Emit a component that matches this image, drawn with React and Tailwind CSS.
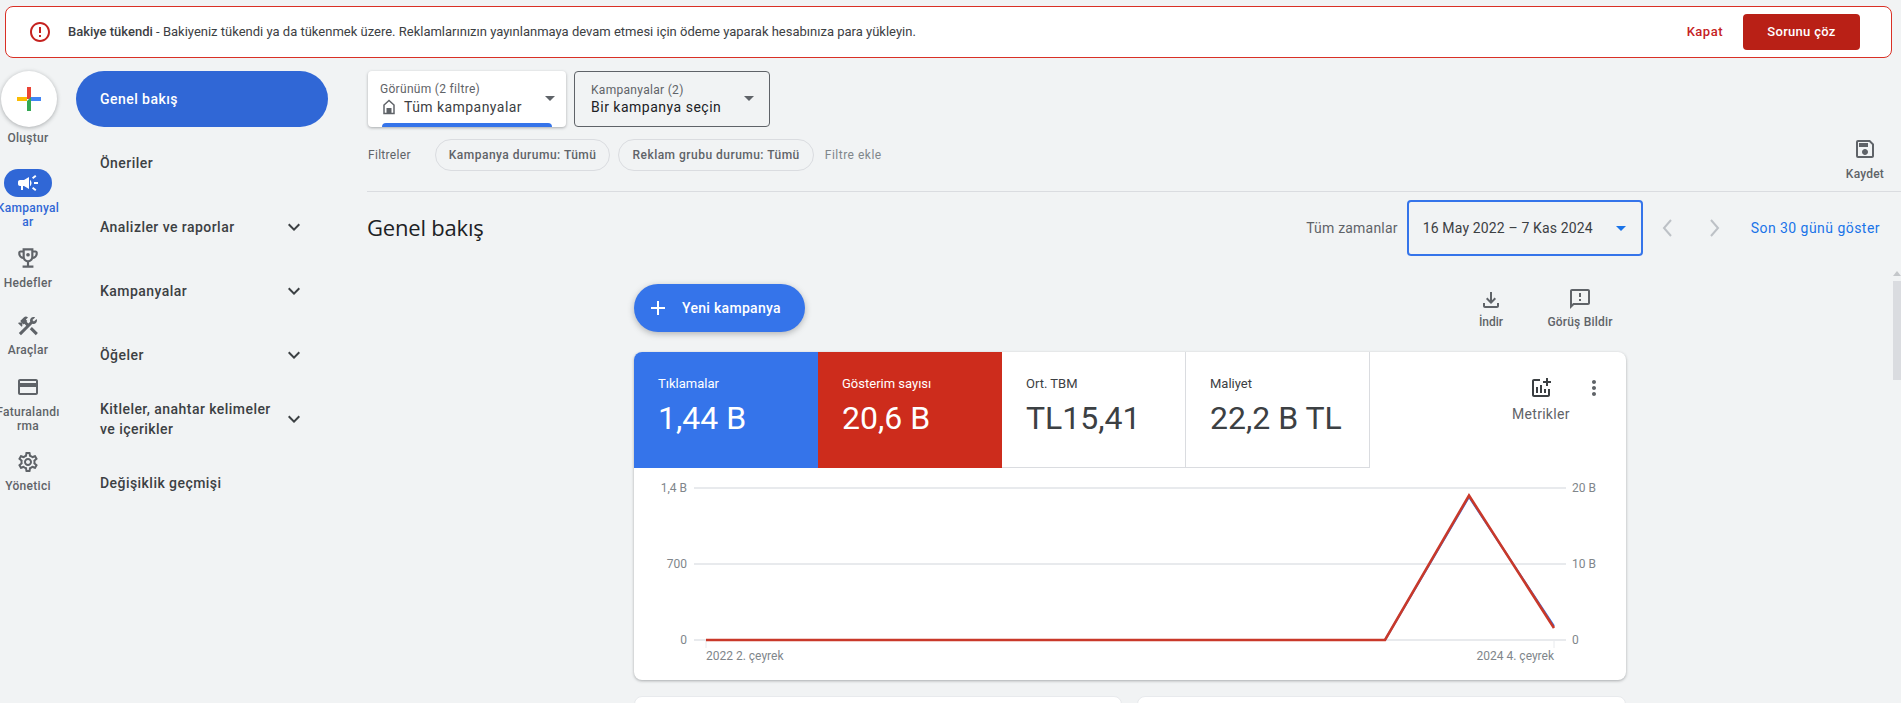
import React from "react";
import {
  MdCampaign,
  MdConstruction,
  MdCreditCard,
  MdOutlineSettings,
  MdExpandMore,
  MdErrorOutline,
  MdOutlineSave,
  MdOutlineFileDownload,
  MdOutlineFeedback,
  MdOutlineAddchart,
  MdMoreVert,
  MdAdd,
} from "react-icons/md";

const navItems = [
  { label: "Öneriler" },
  { label: "Analizler ve raporlar", more: true },
  { label: "Kampanyalar", more: true },
  { label: "Öğeler", more: true },
  { label: "Kitleler, anahtar kelimeler ve içerikler", more: true },
  { label: "Değişiklik geçmişi" },
];

const RailLabel = ({ children, className = "" }) => (
  <div className={`w-[66px] shrink-0 break-all text-center text-[12px] leading-[14px] tracking-[0.3px] font-medium ${className}`}>
    {children}
  </div>
);

const Caret = ({ className = "" }) => (
  <svg viewBox="0 0 10 5" className={`w-[10px] h-[5px] ${className}`}>
    <path d="M0 0h10L5 5z" fill="currentColor" />
  </svg>
);

const GooglePlus = () => (
  <svg viewBox="0 0 24 24" className="w-6 h-6">
    <path d="M10 0h4v12h-4z" fill="#ea4335" />
    <path d="M0 10h10v4H0z" fill="#fbbc04" />
    <path d="M14 10h10v4H12z" fill="#4285f4" />
    <path d="M10 14l4-4v14h-4z" fill="#34a853" />
  </svg>
);

const Trophy = ({ className = "" }) => (
  <svg viewBox="0 0 24 24" className={`w-[26px] h-[26px] ${className}`} fill="currentColor">
    <path
      fillRule="evenodd"
      d="M19 5h-2V3H7v2H5c-1.1 0-2 .9-2 2v1c0 2.55 1.92 4.63 4.39 4.94.63 1.5 1.98 2.63 3.61 2.96V19H7v2h10v-2h-4v-3.100c1.630-.33 2.980-1.460 3.610-2.960C19.080 12.630 21 10.550 21 8V7c0-1.100-.9-2-2-2zM5 8V7h2v3.820C5.840 10.400 5 9.300 5 8zm7 6c-1.650 0-3-1.350-3-3V5h6v6c0 1.650-1.350 3-3 3zm7-6c0 1.300-.84 2.400-2 2.820V7h2v1z"
    />
    <circle cx="12" cy="9" r="1.700" />
  </svg>
);

const HomeIcon = () => (
  <svg viewBox="0 0 16 16" className="w-4 h-4 mr-[7px] shrink-0 text-[#5f6368]">
    <path d="M8 1.500L3 6v8.500h10V6z" fill="none" stroke="currentColor" strokeWidth="1.500" />
    <path d="M5.500 9h5v5.500h-5z" fill="currentColor" />
  </svg>
);

const Rail = () => (
  <div className="w-14 shrink-0 flex flex-col items-center text-[#5f6368]">
    <div className="w-14 h-14 ml-px shrink-0 rounded-full bg-white shadow-[0_1px_4px_rgba(60,64,67,0.4)] flex items-center justify-center">
      <GooglePlus />
    </div>
    <RailLabel className="mt-1">Oluştur</RailLabel>

    <div className="mt-6 w-12 h-7 rounded-full bg-[#3067d6] flex items-center justify-center text-white">
      <MdCampaign size={24} />
    </div>
    <RailLabel className="mt-1 text-[#3067d6]">Kampanyalar</RailLabel>

    <Trophy className="mt-4 shrink-0" />
    <RailLabel className="mt-[5px]">Hedefler</RailLabel>

    <MdConstruction size={24} className="mt-6 shrink-0" />
    <RailLabel className="mt-[5px]">Araçlar</RailLabel>

    <MdCreditCard size={24} className="mt-[18px] shrink-0" />
    <RailLabel className="mt-1.5">Faturalandırma</RailLabel>

    <MdOutlineSettings size={24} className="mt-[17px] shrink-0" />
    <RailLabel className="mt-[5px]">Yönetici</RailLabel>
  </div>
);

const Nav = () => (
  <div className="w-[252px] ml-5 shrink-0 flex flex-col gap-2 text-[14px] font-medium tracking-[0.45px] text-[#3c4043]">
    <div className="h-14 rounded-[28px] bg-[#3067d6] text-white flex items-center pl-6">Genel bakış</div>
    {navItems.map((item) => (
      <div key={item.label} className="h-14 flex items-center pl-6 pr-[26px] justify-between leading-5">
        <span className="w-[180px]">{item.label}</span>
        {item.more && <MdExpandMore size={24} className="text-[#3c4043] mr-[-4px]" />}
      </div>
    ))}
  </div>
);

const Tab = ({ label, value, className = "" }) => (
  <div className={`w-[184px] h-[116px] pl-6 pt-[23px] ${className}`}>
    <div className="text-[13px] leading-[18px]">{label}</div>
    <div className="mt-[5px] text-[32px] leading-[40px]">{value}</div>
  </div>
);

const Chart = () => (
  <svg viewBox="0 0 992 212" className="w-[992px] h-[212px] block" fontFamily="Roboto" fontSize="12" fill="#80868b">
    {[20, 96, 172].map((y) => (
      <path key={y} d={`M60 ${y}H932`} stroke="#e8eaed" strokeWidth="2" fill="none" />
    ))}
    <path d="M72 172v8M920 172v8" stroke="#e8eaed" strokeWidth="1" fill="none" />
    <text x="53" y="24" textAnchor="end">1,4 B</text>
    <text x="53" y="100" textAnchor="end">700</text>
    <text x="53" y="176" textAnchor="end">0</text>
    <text x="938" y="24">20 B</text>
    <text x="938" y="100">10 B</text>
    <text x="938" y="176">0</text>
    <text x="72" y="192">2022 2. çeyrek</text>
    <text x="920" y="192" textAnchor="end">2024 4. çeyrek</text>
    <path d="M72 172H751L835 29L920 158" stroke="#3574ea" strokeWidth="2" fill="none" />
    <path d="M72 172H751L835 27.500L920 160" stroke="#c9392a" strokeWidth="2.600" fill="none" />
  </svg>
);

export default function App() {
  return (
    <div className="relative h-[703px] overflow-hidden bg-[#f1f3f4] font-['Roboto',sans-serif] text-[#3c4043]">
      {/* banner */}
      <div className="pt-1.5 pl-[5px] pr-[9px]">
        <div className="h-[52px] rounded-lg border border-[#d93025] bg-white flex items-center pl-[22px] pr-[31px]">
          <MdErrorOutline size={24} className="text-[#c5221f] shrink-0" />
          <p className="ml-4 flex-1 text-[13px]">
            <span className="font-medium">Bakiye tükendi</span> - Bakiyeniz tükendi ya da tükenmek üzere. Reklamlarınızın yayınlanmaya devam etmesi için ödeme yaparak hesabınıza para yükleyin.
          </p>
          <span className="text-[13px] font-medium tracking-[0.5px] text-[#c5221f]">Kapat</span>
          <button className="ml-5 w-[117px] h-9 rounded bg-[#b92016] text-white text-[13px] tracking-[0.3px] font-medium">Sorunu çöz</button>
        </div>
      </div>

      <div className="flex mt-[13px]">
        <Rail />
        <Nav />

        <div className="flex-1 min-w-0 ml-[39px]">
          {/* view pickers */}
          <div className="flex gap-2 ml-px">
            <div className="relative w-[198px] h-14 rounded bg-white shadow-[0_1px_3px_rgba(60,64,67,0.4)] pl-3 pt-[11px] overflow-hidden">
              <div className="text-[12px] leading-[14px] tracking-[0.3px] text-[#5f6368]">Görünüm (2 filtre)</div>
              <div className="mt-[2px] ml-px flex items-center text-[14px] leading-[18px] tracking-[0.45px]">
                <HomeIcon />
                Tüm kampanyalar
              </div>
              <Caret className="absolute right-[11px] top-[25px] text-[#5f6368]" />
              <div className="absolute left-[14px] right-[14px] bottom-0 h-1 rounded-t bg-[#3574ea]"></div>
            </div>
            <div className="relative w-[196px] h-14 rounded border border-[#5f6368] pl-4 pt-[11px]">
              <div className="text-[12px] leading-[14px] tracking-[0.3px] text-[#5f6368]">Kampanyalar (2)</div>
              <div className="mt-px text-[14px] leading-[18px] tracking-[0.5px] text-[#202124]">Bir kampanya seçin</div>
              <Caret className="absolute right-[15px] top-[24px] text-[#5f6368]" />
            </div>
          </div>

          {/* filters */}
          <div className="mt-3 h-[53px] flex items-start border-b border-[#dadce0]">
            <div className="h-8 flex items-center">
              <span className="ml-px text-[12px] tracking-[0.3px] text-[#5f6368]">Filtreler</span>
              <span className="ml-6 h-8 px-[13px] rounded-full border border-[#dadce0] flex items-center text-[12px] font-medium tracking-[0.48px] text-[#5f6368]">Kampanya durumu: Tümü</span>
              <span className="ml-2 h-8 px-[13px] rounded-full border border-[#dadce0] flex items-center text-[12px] font-medium tracking-[0.48px] text-[#5f6368]">Reklam grubu durumu: Tümü</span>
              <span className="ml-[11px] text-[12px] tracking-[0.5px] text-[#80868b]">Filtre ekle</span>
            </div>
            <div className="ml-auto mr-[17px] -mt-0.5 flex flex-col items-center text-[#5f6368]">
              <MdOutlineSave size={24} />
              <span className="mt-1.5 text-[12px] leading-[14px] tracking-[0.2px] font-medium">Kaydet</span>
            </div>
          </div>

          {/* title row */}
          <div className="h-[72px] flex items-center">
            <h1 className="-mt-0.5 text-[22px] font-normal text-[#202124] font-['Open_Sans',sans-serif] tracking-[-0.2px]">Genel bakış</h1>
            <span className="ml-auto text-[14px] tracking-[0.2px] text-[#5f6368]">Tüm zamanlar</span>
            <div className="ml-[9px] w-[236px] h-14 rounded border-2 border-[#3574ea] flex items-center pl-[14px] pr-[15px] justify-between text-[14px] tracking-[0.15px]">
              16 May 2022 – 7 Kas 2024
              <Caret className="text-[#1a73e8]" />
            </div>
            <svg viewBox="0 0 12 20" className="ml-[18px] w-3 h-5 text-[#bdc1c6]">
              <path d="M10 2L3 10l7 8" fill="none" stroke="currentColor" strokeWidth="2" />
            </svg>
            <svg viewBox="0 0 12 20" className="ml-9 w-3 h-5 text-[#bdc1c6]">
              <path d="M2 2l7 8-7 8" fill="none" stroke="currentColor" strokeWidth="2" />
            </svg>
            <span className="ml-[30px] mr-[21px] text-[14px] tracking-[0.46px] text-[#1a73e8]">Son 30 günü göster</span>
          </div>

          {/* content */}
          <div className="ml-[267px] w-[992px] mt-5">
            <div className="h-12 flex items-center">
              <button className="w-[171px] h-12 rounded-full bg-[#3574ea] text-white shadow-[0_2px_6px_rgba(60,64,67,0.35)] flex items-center pl-3 text-[14px] tracking-[0.3px] font-medium">
                <MdAdd size={24} />
                <span className="ml-[12px]">Yeni kampanya</span>
              </button>
              <div className="ml-auto flex flex-col items-center text-[#5f6368] w-[60px] mr-[19px]">
                <MdOutlineFileDownload size={24} />
                <span className="mt-[3px] text-[12px] leading-[14px] font-medium">İndir</span>
              </div>
              <div className="flex flex-col items-center text-[#5f6368] w-[80px] mr-[6px]">
                <MdOutlineFeedback size={24} className="-mt-px" />
                <span className="mt-1 text-[12px] leading-[14px] tracking-[0.2px] font-medium">Görüş Bildir</span>
              </div>
            </div>

            <div className="mt-5 rounded-lg bg-white shadow-[0_1px_3px_rgba(60,64,67,0.4)] overflow-hidden">
              <div className="flex h-[116px]">
                <Tab label="Tıklamalar" value="1,44 B" className="bg-[#3574ea] text-white" />
                <Tab label="Gösterim sayısı" value="20,6 B" className="bg-[#cd2c1c] text-white" />
                <Tab label="Ort. TBM" value="TL15,41" className="border-r border-b border-[#dadce0]" />
                <Tab label="Maliyet" value="22,2 B TL" className="border-r border-b border-[#dadce0]" />
                <div className="flex-1 flex pt-6 pl-[142px]">
                  <div className="flex flex-col items-center text-[#3c4043]">
                    <MdOutlineAddchart size={24} />
                    <span className="mt-[5px] text-[14px] leading-[18px] tracking-[0.3px] text-[#5f6368]">Metrikler</span>
                  </div>
                  <MdMoreVert size={24} className="ml-3 text-[#5f6368]" />
                </div>
              </div>
              <Chart />
            </div>

            <div className="mt-4 flex gap-[15px]">
              <div className="w-[488px] h-32 rounded-lg bg-white border border-[#e8eaed]"></div>
              <div className="w-[489px] h-32 rounded-lg bg-white border border-[#e8eaed]"></div>
            </div>
          </div>
        </div>
      </div>

      {/* page scrollbar */}
      <svg viewBox="0 0 8 5" className="absolute right-0 top-[271px] w-2 h-[5px] text-[#c4c7ca]">
        <path d="M4 0l4 5H0z" fill="currentColor" />
      </svg>
      <div className="absolute right-0 top-[281px] w-2 h-[99px] bg-[#dadce0]"></div>
    </div>
  );
}
